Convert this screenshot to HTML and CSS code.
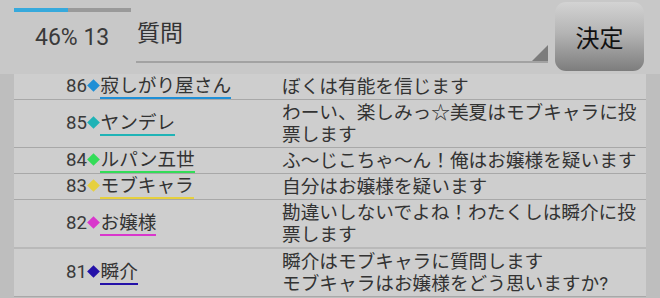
FILE: index.html
```html
<!DOCTYPE html>
<html lang="ja">

<head>
    <meta charset="UTF-8">
    <meta name="viewport" content="width=device-width, initial-scale=1.0" />
    <title>投票</title>
    <link rel="stylesheet" href="styles.css">
</head>

<body>
    <!-- Top bar -->
    <div class="header">
        <div class="status">
            <div class="progress">
                <div class="progress-fill" style="width: 46%;"></div>
            </div>
            <div class="status-text">46% 13</div>
        </div>

        <div class="question">
            <span class="question-text">質問</span>
            <span class="spinner-mark"></span>
        </div>

        <button class="decide">決定</button>
    </div>

    <!-- Log -->
    <div class="list">
        <table class="log">
            <tr class="first">
                <td class="who">86<span class="dia c-blue"></span><span class="name c-blue">寂しがり屋さん</span></td>
                <td class="msg">ぼくは有能を信じます</td>
            </tr>
            <tr>
                <td class="who">85<span class="dia c-teal"></span><span class="name c-teal">ヤンデレ</span></td>
                <td class="msg">わーい、楽しみっ☆美夏はモブキャラに投票します</td>
            </tr>
            <tr>
                <td class="who">84<span class="dia c-green"></span><span class="name c-green">ルパン五世</span></td>
                <td class="msg">ふ～じこちゃ～ん！俺はお嬢様を疑います</td>
            </tr>
            <tr>
                <td class="who">83<span class="dia c-yellow"></span><span class="name c-yellow">モブキャラ</span></td>
                <td class="msg">自分はお嬢様を疑います</td>
            </tr>
            <tr>
                <td class="who">82<span class="dia c-pink"></span><span class="name c-pink">お嬢様</span></td>
                <td class="msg">勘違いしないでよね！わたくしは瞬介に投票します</td>
            </tr>
            <tr class="split">
                <td class="who">81<span class="dia c-navy"></span><span class="name c-navy">瞬介</span></td>
                <td class="msg">瞬介はモブキャラに質問します<br>モブキャラはお嬢様をどう思いますか?</td>
            </tr>
        </table>
    </div>
</body>

</html>
```

FILE: styles.css
```css
* {
    margin: 0;
    padding: 0;
    box-sizing: border-box;
}

body {
    font-family: Roboto, "Noto Sans CJK JP", sans-serif;
    background-color: #c8c8c8;
    color: #3a3a3a;
    width: 660px;
    height: 298px;
    overflow: hidden;
}

/* Top bar */
.header {
    display: flex;
    align-items: flex-start;
    height: 74px;
    padding-left: 14px;
}

.status {
    width: 117px;
    padding-top: 8px;
}

.progress {
    height: 4px;
    background-color: #9a9a9a;
}

.progress-fill {
    height: 100%;
    background-color: #36a9dc;
}

.status-text {
    margin-top: 12px;
    padding-left: 21px;
    font-size: 23px;
    line-height: 27px;
    white-space: nowrap;
}

.question {
    position: relative;
    width: 412px;
    height: 63px;
    margin-left: 5px;
    padding: 20px 0 0 1px;
    border-bottom: 2px solid #a2a2a2;
    font-size: 23px;
    line-height: 27px;
    color: #333;
}

.spinner-mark {
    position: absolute;
    right: 0;
    bottom: 0;
    width: 16px;
    height: 16px;
    background-color: #7c7c7c;
    clip-path: polygon(100% 0, 100% 100%, 0 100%);
}

.decide {
    width: 89px;
    height: 69px;
    margin: 2px 0 0 7px;
    border: none;
    border-radius: 11px;
    background: linear-gradient(#d3d3d3 0%, #b4b4b4 45%, #7d7d7d 100%);
    font-family: "Noto Sans CJK JP", sans-serif;
    font-size: 24px;
    color: #111;
}

/* Log table */
.list {
    height: 224px;
    padding: 0 14px;
    background-color: #bebebe;
}

.log {
    width: 632px;
    border-collapse: collapse;
    background-color: #cecece;
    font-size: 18.67px;
}

.log tr {
    height: 26px;
}

.log tr.first {
    height: 25px;
}

.log td {
    border-bottom: 1px solid #a8a8a8;
    vertical-align: middle;
}

.split td {
    border-top: 2px solid #b9b9b9;
}

.who {
    width: 268px;
    padding: 1px 0 0 52px;
    line-height: 20px;
    white-space: nowrap;
}

.msg {
    padding: 2px 0 1px;
    line-height: 22px;
    color: #333;
}

.dia {
    display: inline-block;
    width: 9px;
    height: 9px;
    margin: 0 2px 0 2.5px;
    vertical-align: 2px;
    transform: rotate(45deg);
}

.name {
    display: inline-block;
    padding-bottom: 1px;
    border-bottom: 2px solid;
    color: #333;
}

.dia.c-blue { background-color: #1f8fd6; }
.name.c-blue { border-color: #1f8fd6; }
.dia.c-teal { background-color: #1fb3b6; }
.name.c-teal { border-color: #1fb3b6; }
.dia.c-green { background-color: #33dc58; }
.name.c-green { border-color: #33dc58; }
.dia.c-yellow { background-color: #e6d03e; }
.name.c-yellow { border-color: #e6d03e; }
.dia.c-pink { background-color: #d936cc; }
.name.c-pink { border-color: #d936cc; }
.dia.c-navy { background-color: #2411a8; }
.name.c-navy { border-color: #2411a8; }
```
